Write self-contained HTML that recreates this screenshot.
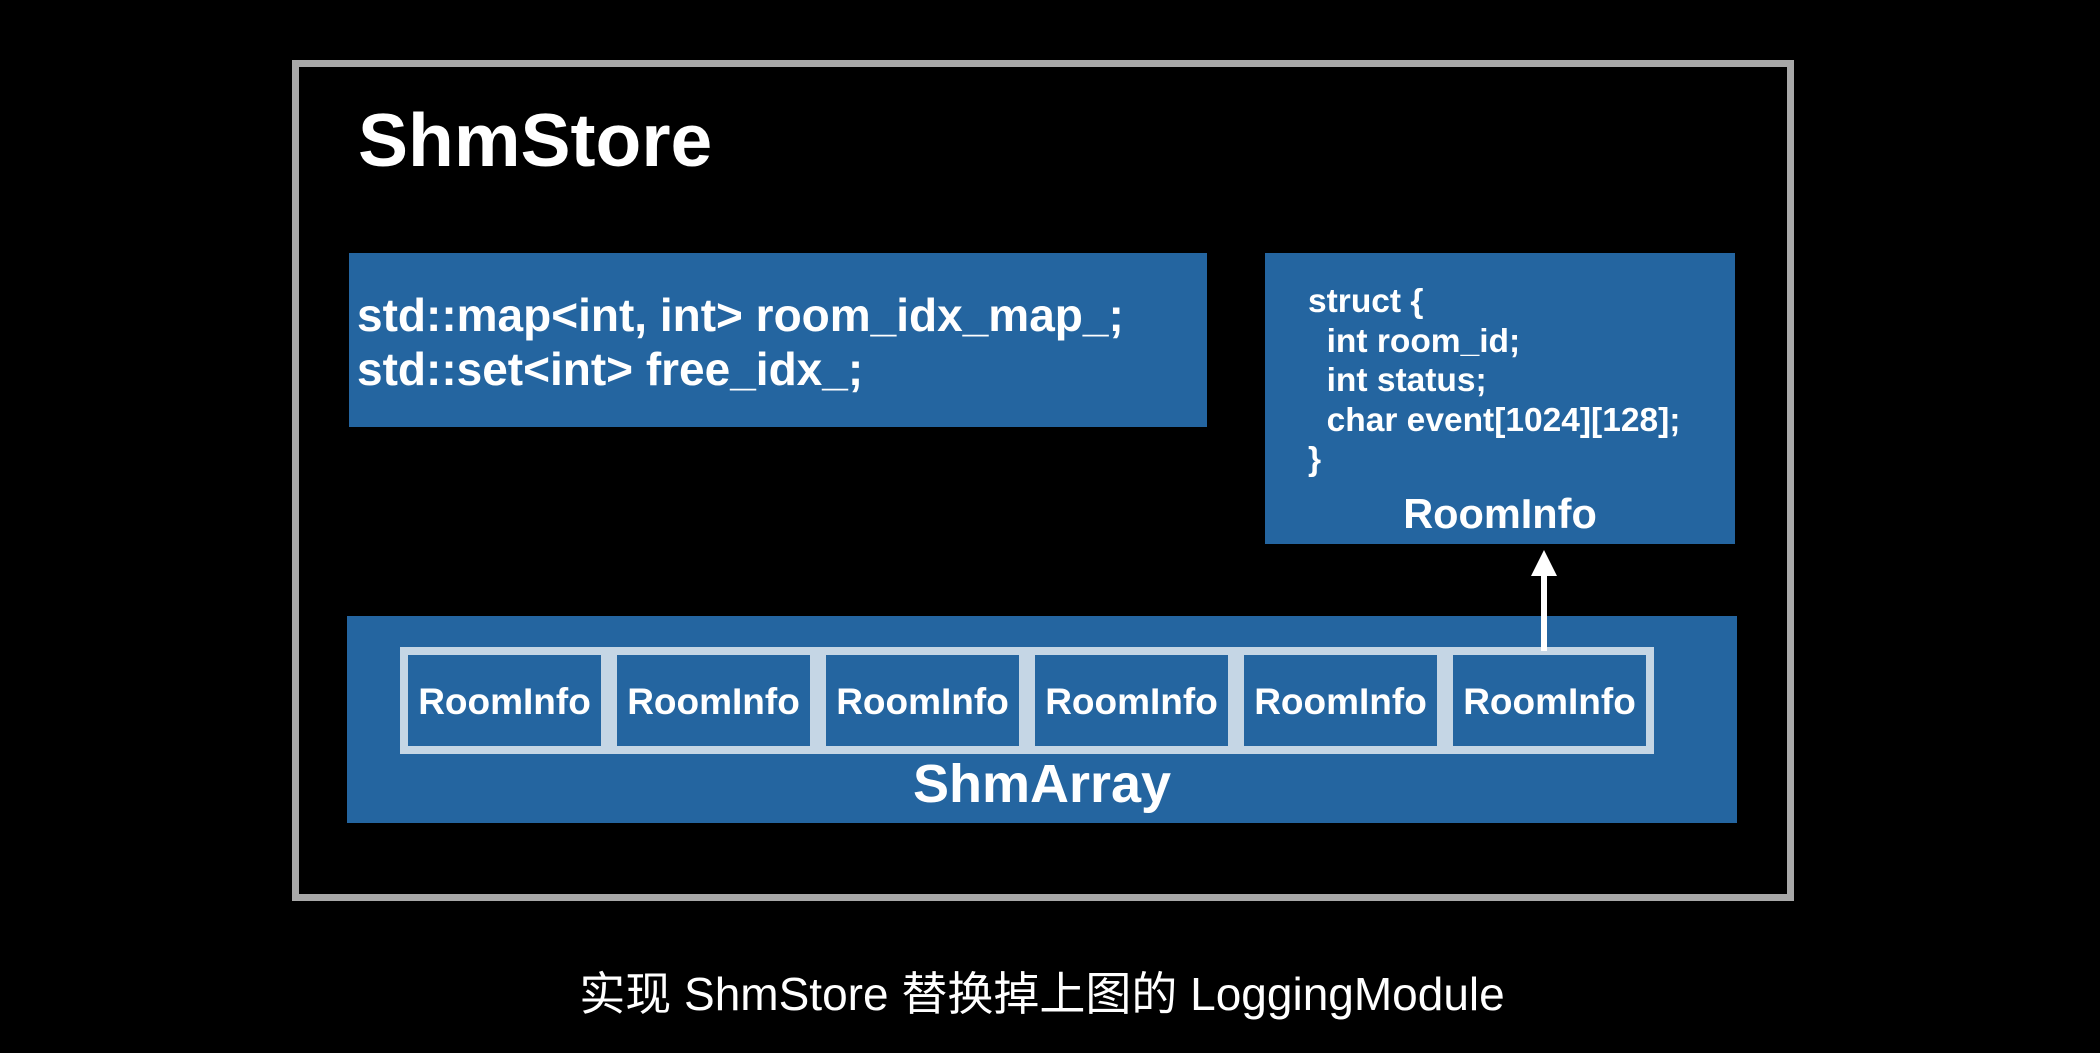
<!DOCTYPE html>
<html><head><meta charset="utf-8"><style>
html,body{margin:0;padding:0;background:#000;}
body{width:2100px;height:1053px;position:relative;overflow:hidden;font-family:"Liberation Sans","Noto Sans CJK SC",sans-serif;color:#fff;}
.abs{position:absolute;}
.blue{background:#2465a0;}
.outer{left:292px;top:60px;width:1488px;height:827px;border:7px solid #a8a8a8;}
.b{font-weight:bold;white-space:nowrap;}
.cell{position:absolute;top:647px;height:91px;border:8px solid #c5d6e5;width:193px;}
.cell span{position:absolute;left:-10px;right:-10px;top:26px;text-align:center;font-weight:bold;font-size:37px;}
</style></head><body>
<div class="abs outer"></div>
<div class="abs b" style="left:358px;top:100px;font-size:75px;line-height:80px;">ShmStore</div>
<div class="abs blue" style="left:349px;top:253px;width:858px;height:174px;"></div>
<div class="abs b" style="left:357px;top:288px;font-size:46px;line-height:54px;">std::map&lt;int, int&gt; room_idx_map_;<br>std::set&lt;int&gt; free_idx_;</div>
<div class="abs blue" style="left:1265px;top:253px;width:470px;height:291px;"></div>
<div class="abs b" style="left:1308px;top:282px;font-size:33.5px;line-height:39.5px;white-space:pre;">struct {
  int room_id;
  int status;
  char event[1024][128];
}</div>
<div class="abs b" style="left:1265px;top:490px;width:470px;text-align:center;font-size:41.5px;">RoomInfo</div>
<div class="abs" style="left:1541px;top:575px;width:6px;height:78px;background:#fff;"></div>
<div class="abs" style="left:1531px;top:550px;width:0;height:0;border-left:13px solid transparent;border-right:13px solid transparent;border-bottom:26px solid #fff;"></div>
<div class="abs blue" style="left:347px;top:616px;width:1390px;height:207px;"></div>
<div class="cell" style="left:400px;"><span>RoomInfo</span></div>
<div class="cell" style="left:609px;"><span>RoomInfo</span></div>
<div class="cell" style="left:818px;"><span>RoomInfo</span></div>
<div class="cell" style="left:1027px;"><span>RoomInfo</span></div>
<div class="cell" style="left:1236px;"><span>RoomInfo</span></div>
<div class="cell" style="left:1445px;"><span>RoomInfo</span></div>
<div class="abs" style="left:1541px;top:616px;width:6px;height:35px;background:#fff;"></div>
<div class="abs b" style="left:347px;top:754px;width:1390px;text-align:center;font-size:54px;line-height:60px;">ShmArray</div>
<div class="abs" style="left:0;top:966px;width:2084px;text-align:center;font-size:46px;line-height:56px;white-space:nowrap;">实现 ShmStore 替换掉上图的 LoggingModule</div>
</body></html>
